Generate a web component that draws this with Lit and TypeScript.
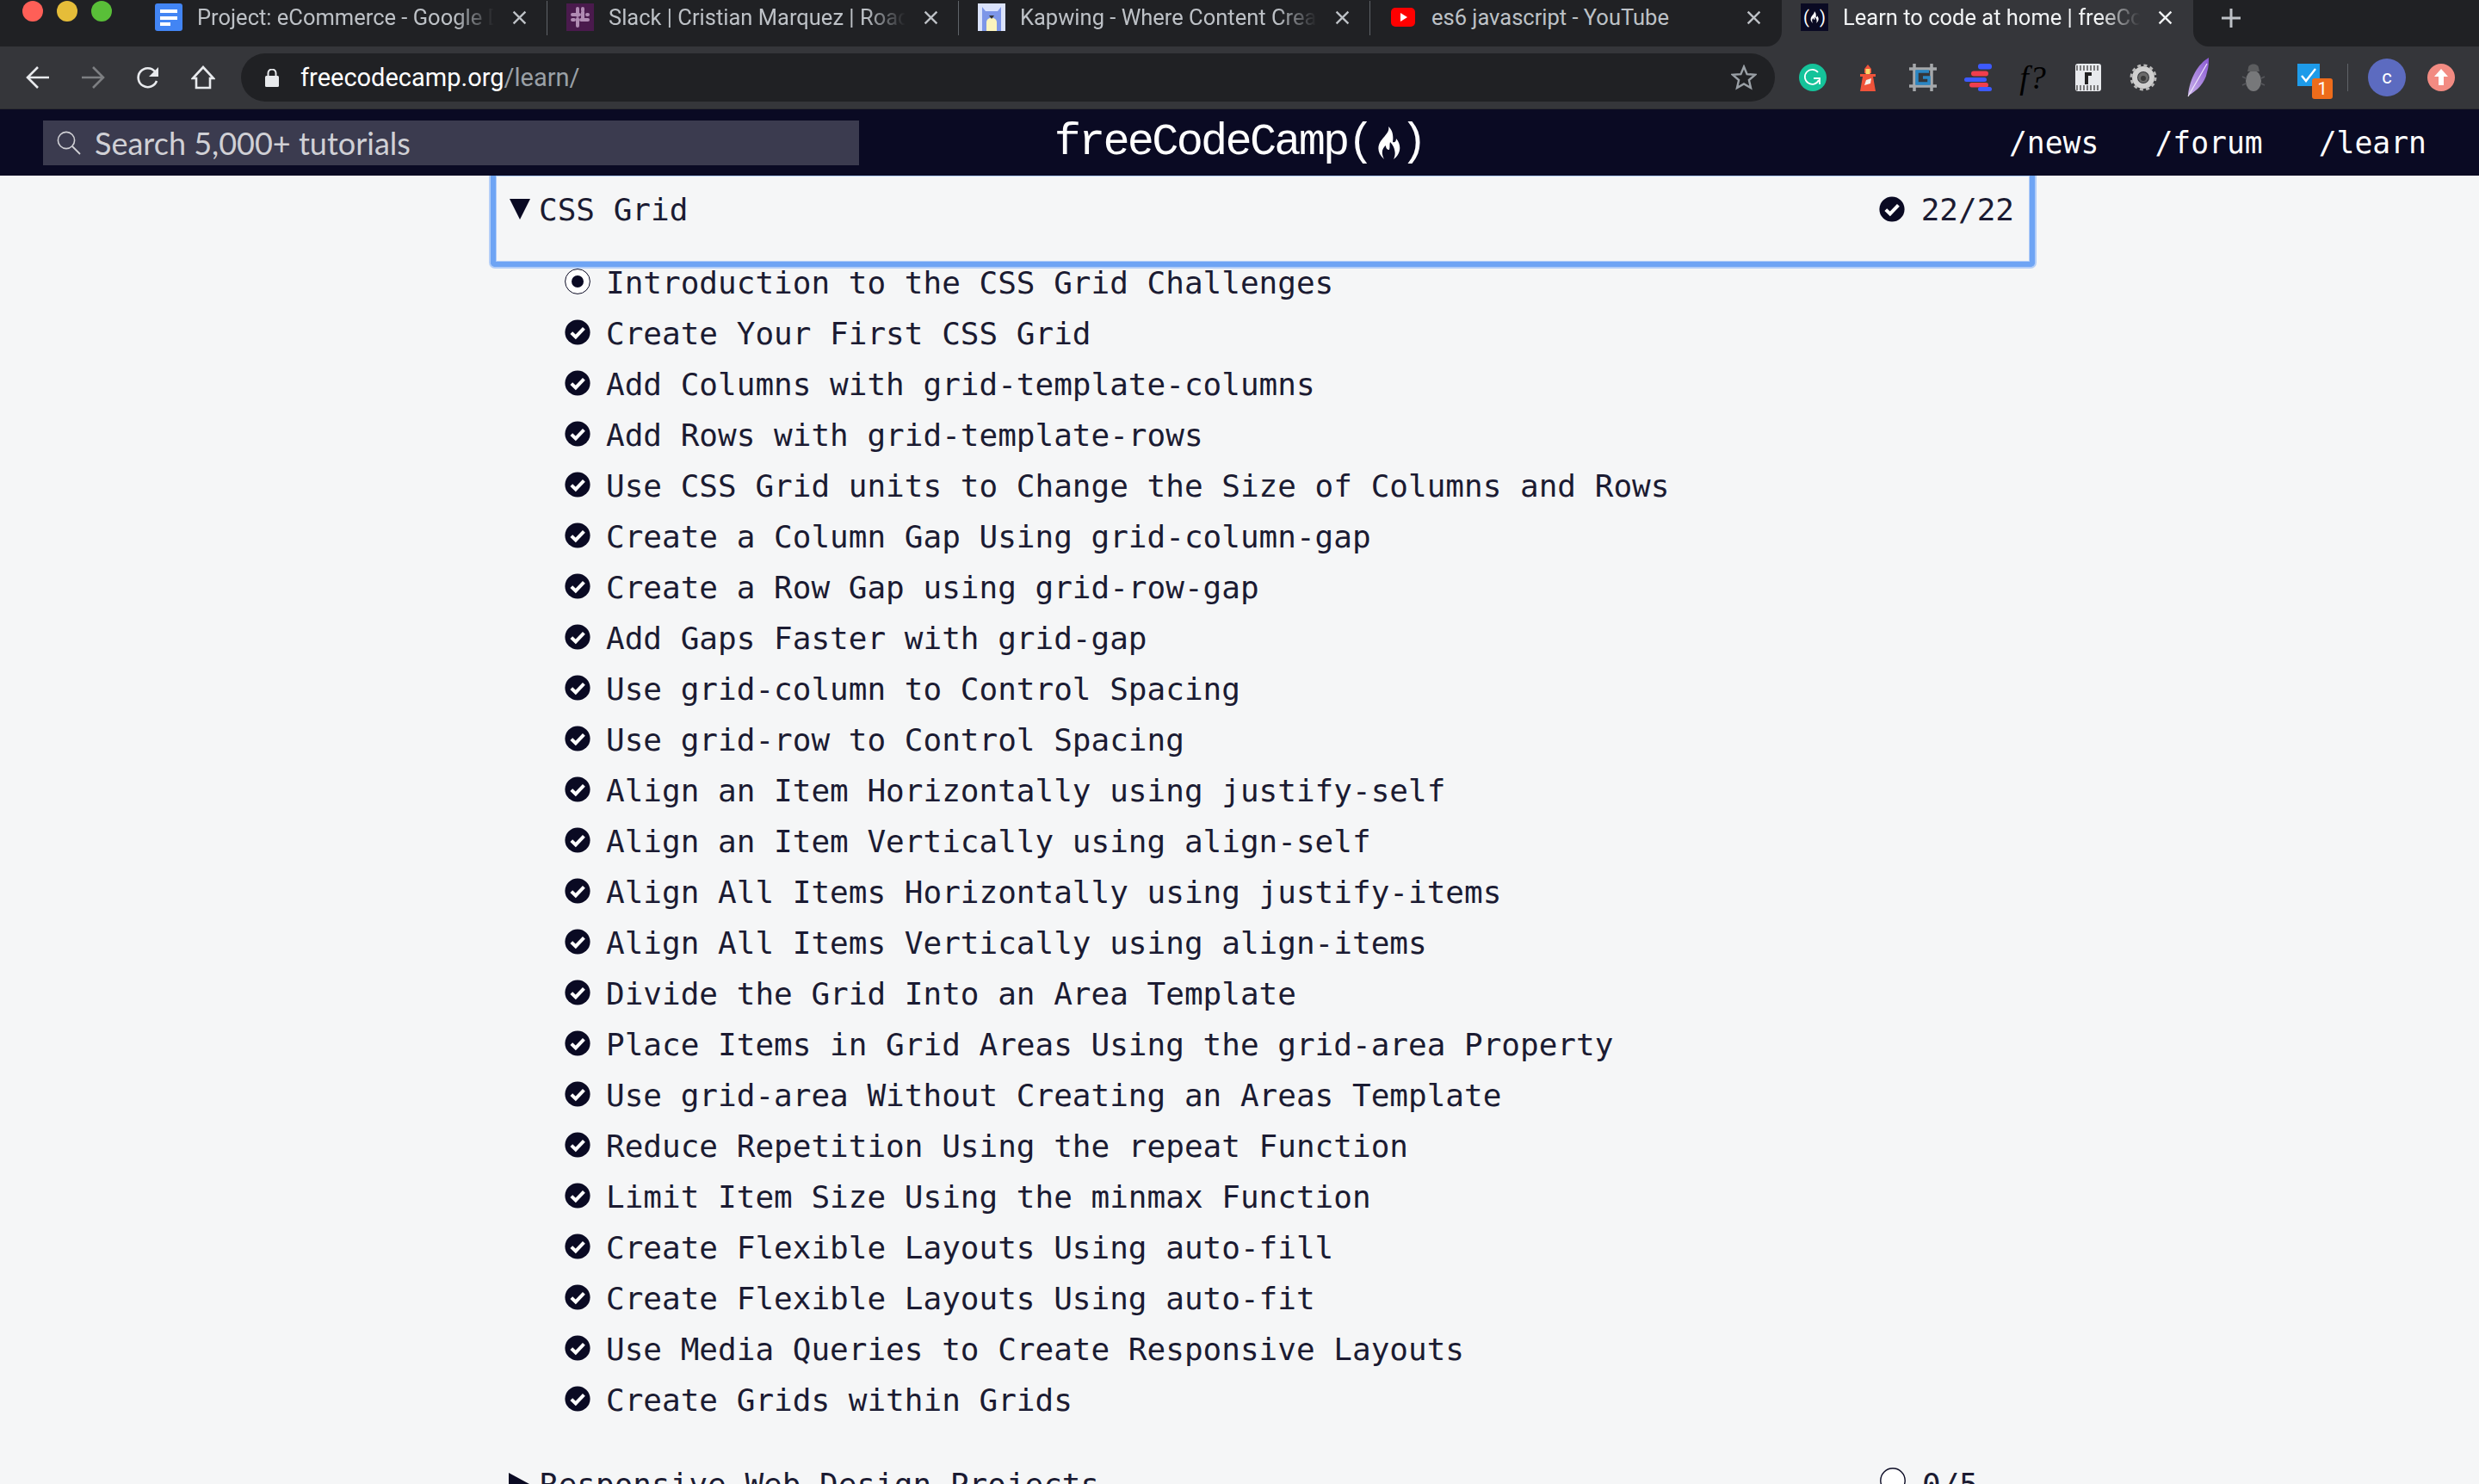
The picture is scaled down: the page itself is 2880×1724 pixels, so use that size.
import { LitElement, css, html } from "lit";
import { customElement } from "lit/decorators.js";

const flame = (w: number, h: number) => html`<svg width=${w} height=${h} viewBox="0 0 27 38"><path fill="#fff" d="M13 0C15 6 8 11 4 17C0 23 0 31 8 38C4 30 6 25 10 22C10 26 12 27 14 27C15 24 14 21 15 18C19 22 23 30 19 38C27 32 29 22 22 14C22 18 20 19 18 18C19 11 18 4 13 0Z"/></svg>`;

const checkIcon = html`<svg class="state" viewBox="0 0 30 30"><circle cx="15" cy="15" r="14.6" fill="#0a0a23"/><path d="M7.8 15.6l5 4.8L22.4 10.4" fill="none" stroke="#fff" stroke-width="4"/></svg>`;
const currentIcon = html`<svg class="state" viewBox="0 0 30 30"><circle cx="15" cy="15" r="14.4" fill="#fff" stroke="#0a0a23" stroke-width="1"/><circle cx="15" cy="15" r="7" fill="#0a0a23"/></svg>`;
const emptyIcon = html`<svg class="state" viewBox="0 0 30 30"><circle cx="15" cy="15" r="14.2" fill="#fff" stroke="#0a0a23" stroke-width="1.4"/></svg>`;

const favDocs = html`<svg width="32" height="32" viewBox="0 0 32 32"><rect width="32" height="32" rx="3" fill="#4285f4"/><path d="M6 7h20v4H6zM6 15h20v4H6zM6 22h12v4H6z" fill="#fff"/></svg>`;
const favSlack = html`<svg width="32" height="32" viewBox="0 0 32 32"><rect width="32" height="32" fill="#4a1a4d"/><path d="M13 6v8M19 10v8M7 13h8M17 19h8M13 18v8M19 6v2M24 13h1M7 19h2" stroke="#b08bb3" stroke-width="4" stroke-linecap="round"/></svg>`;
const favKapwing = html`<svg width="32" height="32" viewBox="0 0 32 32"><rect width="32" height="32" fill="#dbe3fb"/><path d="M5 4l4 5h14l4-5v28H5z" fill="#7d96e8"/><path d="M10 32V22c0-7 12-7 12 0v10z" fill="#fbf4bd"/><path d="M13 14h6l-3 4z" fill="#333"/></svg>`;
const favYoutube = html`<svg width="32" height="32" viewBox="0 0 32 32"><rect x="2" y="5" width="28" height="22" rx="5" fill="#f00"/><path d="M13 11l8 5-8 5z" fill="#fff"/></svg>`;
const favFcc = html`<span class="fav-fcc"><span>(</span>${flame(10, 14)}<span>)</span></span>`;

const tabs = [
  { title: "Project: eCommerce - Google Docs", icon: favDocs, fade: true },
  { title: "Slack | Cristian Marquez | Roadmap", icon: favSlack, fade: true },
  { title: "Kapwing - Where Content Creators", icon: favKapwing, fade: true },
  { title: "es6 javascript - YouTube", icon: favYoutube, fade: false },
  { title: "Learn to code at home | freeCodeCamp", icon: favFcc, fade: true },
];

const extensions = [
  html`<svg width="32" height="32" viewBox="0 0 32 32"><circle cx="16" cy="16" r="16" fill="#15c39a"/><path d="M22 10a8.5 8.5 0 1 0 1 9M17 17h7v7" fill="none" stroke="#fff" stroke-width="1.8"/></svg>`,
  html`<svg width="32" height="32" viewBox="0 0 32 32"><path d="M12 6l4-5 4 5v5h-8z" fill="#f0533a"/><rect x="13.5" y="6" width="5" height="6" fill="#fbd96a"/><path d="M7 12h18v3h-3l3 17H7l3-17H7z" fill="#f0533a"/><path d="M12 25l2-6 6-2-1 6z" fill="#f5f1ea"/></svg>`,
  html`<svg width="32" height="32" viewBox="0 0 32 32"><path d="M6 0v32M26 0v32M0 6h32M0 26h32" stroke="#a5a8ab" stroke-width="3.5"/><path d="M23 9H9v14h14v-7h-7" fill="none" stroke="#2a86c4" stroke-width="3.5"/></svg>`,
  html`<svg width="32" height="32" viewBox="0 0 32 32"><rect x="16" width="16" height="6.5" rx="3" fill="#3d5afe"/><rect x="8" y="8.5" width="20" height="6" rx="3" fill="#f03e4d"/><rect y="16" width="26" height="5" rx="2.5" fill="#3d5afe"/><rect x="6" y="22" width="22" height="5.5" rx="2.7" fill="#f03e4d"/><rect x="16" y="27" width="16" height="5" rx="2.5" fill="#3d5afe"/></svg>`,
  html`<span class="ext-f">f?</span>`,
  html`<svg width="32" height="34" viewBox="0 0 32 34"><rect x="1" y="1" width="30" height="32" rx="3" fill="#e8eaed"/><path d="M3 3v6M7 3v6M11 3v6M15 3v6M19 3v6M23 3v6M27 3v6M3 26v6M7 26v6M11 26v6M15 26v6M19 26v6M23 26v6M27 26v6" stroke="#555" stroke-width="1.5"/><path d="M12 11h8v4h-4v10h-4z" fill="#222"/></svg>`,
  html`<svg width="32" height="34" viewBox="0 0 32 34"><circle cx="16" cy="17" r="10" fill="none" stroke="#cfcfcf" stroke-width="6"/><circle cx="16" cy="17" r="14" fill="none" stroke="#b8b8b8" stroke-width="3" stroke-dasharray="4 3.33"/><circle cx="16" cy="17" r="6" fill="#6a6a6a"/><circle cx="16" cy="18" r="3" fill="#3a3a3a"/></svg>`,
  html`<svg width="28" height="48" viewBox="0 0 28 48"><defs><linearGradient id="q" x1="0" y1="1" x2="1" y2="0"><stop offset="0" stop-color="#c9b2ea"/><stop offset="1" stop-color="#8a58d2"/></linearGradient></defs><path d="M26 1C14 8 4 24 2 45C12 40 22 30 24 18C26 12 26 6 26 1Z" fill="url(#q)"/><path d="M24 8L2 46" stroke="#efe6fb" stroke-width="1.2"/></svg>`,
  html`<svg width="32" height="34" viewBox="0 0 32 34"><ellipse cx="16" cy="21" rx="9" ry="12" fill="#77787a"/><path d="M10 6c0-6 12-6 12 0l1 4H9z" fill="#5c5d5f"/><path d="M3 16l4 2M3 26l4-2M29 16l-4 2M29 26l-4-2" stroke="#55565a" stroke-width="1.5"/></svg>`,
  html`<span class="ext-todo"><svg width="26" height="26" viewBox="0 0 26 26"><rect width="26" height="26" fill="#1e9be9"/><path d="M5 14l5 6L21 6" fill="none" stroke="#fff" stroke-width="2.4"/></svg><span class="badge">1</span></span>`,
];

const lessons = [
  "Introduction to the CSS Grid Challenges",
  "Create Your First CSS Grid",
  "Add Columns with grid-template-columns",
  "Add Rows with grid-template-rows",
  "Use CSS Grid units to Change the Size of Columns and Rows",
  "Create a Column Gap Using grid-column-gap",
  "Create a Row Gap using grid-row-gap",
  "Add Gaps Faster with grid-gap",
  "Use grid-column to Control Spacing",
  "Use grid-row to Control Spacing",
  "Align an Item Horizontally using justify-self",
  "Align an Item Vertically using align-self",
  "Align All Items Horizontally using justify-items",
  "Align All Items Vertically using align-items",
  "Divide the Grid Into an Area Template",
  "Place Items in Grid Areas Using the grid-area Property",
  "Use grid-area Without Creating an Areas Template",
  "Reduce Repetition Using the repeat Function",
  "Limit Item Size Using the minmax Function",
  "Create Flexible Layouts Using auto-fill",
  "Create Flexible Layouts Using auto-fit",
  "Use Media Queries to Create Responsive Layouts",
  "Create Grids within Grids",
];

@customElement("app-root")
export class AppRoot extends LitElement {
  static styles = css`
    :host {
      display: block;
      height: 1724px;
      overflow: hidden;
      background: #f5f6f7;
      font-family: Roboto, "Liberation Sans", sans-serif;
    }

    .tabstrip {
      display: flex;
      height: 54px;
      background: #35363a;
    }
    .strip-left {
      display: flex;
      width: 2070px;
      flex: none;
      background: #202124;
      border-bottom-right-radius: 18px;
    }
    .lights {
      display: flex;
      gap: 16px;
      width: 132px;
      flex: none;
      padding: 1px 0 0 26px;
    }
    .lights i {
      width: 24px;
      height: 24px;
      border-radius: 50%;
    }
    .tab {
      display: flex;
      align-items: flex-start;
      width: 478px;
      flex: none;
      box-sizing: border-box;
      padding: 4px 0 0 22px;
      position: relative;
      color: #bdc1c6;
      font-size: 25.5px;
    }
    .tab.sep::after {
      content: "";
      position: absolute;
      right: 0;
      top: 1px;
      height: 40px;
      width: 1px;
      background: #5f6368;
    }
    .tab.active {
      color: #f1f3f4;
    }
    .tab-title {
      width: 352px;
      flex: none;
      margin-left: 17px;
      white-space: nowrap;
      overflow: hidden;
      line-height: 32px;
    }
    .tab-title.fade {
      -webkit-mask-image: linear-gradient(90deg, #000 85%, transparent 98%);
      mask-image: linear-gradient(90deg, #000 85%, transparent 98%);
    }
    .tab-close {
      width: 17px;
      height: 17px;
      flex: none;
      margin: 8px 0 0 14px;
    }
    .fav-fcc {
      display: flex;
      align-items: center;
      justify-content: center;
      gap: 1px;
      width: 32px;
      height: 32px;
      background: #0a0a23;
      color: #fff;
      font-size: 20px;
      line-height: 32px;
    }
    .strip-right {
      flex: 1;
      background: #202124;
      border-bottom-left-radius: 18px;
      padding: 9px 0 0 32px;
    }

    .toolbar {
      display: flex;
      align-items: center;
      height: 73px;
      box-sizing: border-box;
      padding: 0 0 0 12px;
      background: #35363a;
      border-bottom: 1px solid #2c2d30;
    }
    .slot {
      width: 64px;
      height: 56px;
      flex: none;
      display: flex;
      align-items: center;
      justify-content: center;
    }
    .omnibox {
      display: flex;
      align-items: center;
      width: 1782px;
      height: 56px;
      flex: none;
      box-sizing: border-box;
      margin: 0 12px 0 12px;
      padding: 0 21px 0 28px;
      border-radius: 28px;
      background: #202124;
      font-size: 29px;
      color: #9aa0a6;
    }
    .url {
      flex: 1;
      margin-left: 25px;
    }
    .url b {
      font-weight: 400;
      color: #fff;
    }
    .ext-f {
      font: italic 38px "Liberation Serif", serif;
      letter-spacing: 1px;
      color: #000;
      white-space: nowrap;
    }
    .ext-todo {
      position: relative;
      display: block;
      width: 26px;
      height: 41px;
      margin-top: 9px;
    }
    .badge {
      position: absolute;
      left: 17px;
      top: 17px;
      width: 24px;
      height: 24px;
      border-radius: 3px;
      background: #ee6c1b;
      color: #fff;
      font-size: 20px;
      line-height: 24px;
      text-align: center;
    }
    .tool-sep {
      width: 1px;
      height: 32px;
      margin: 0 23px 0 13px;
      background: #5f6368;
      flex: none;
    }
    .avatar {
      width: 44px;
      height: 44px;
      flex: none;
      border-radius: 50%;
      background: #5c6bc0;
      color: #fff;
      font-size: 22px;
      line-height: 44px;
      text-align: center;
    }
    .update {
      margin-left: 25px;
      flex: none;
    }

    .site-nav {
      display: grid;
      grid-template-columns: 1fr auto 1fr;
      align-items: center;
      height: 77px;
      background: #0a0a23;
      color: #fff;
    }
    .search {
      display: flex;
      align-items: center;
      width: 948px;
      height: 52px;
      box-sizing: border-box;
      margin-left: 50px;
      padding-left: 16px;
      background: #3b3b4f;
      color: #d0d0d5;
      font: 36px Lato, sans-serif;
    }
    .search span {
      margin-left: 16px;
    }
    .logo {
      display: flex;
      align-items: center;
      font: 52px "Liberation Mono", monospace;
      letter-spacing: -2.8px;
      line-height: 60px;
    }
    .logo svg {
      margin: 0 0 0 6px;
    }
    .links {
      display: flex;
      justify-content: flex-end;
      gap: 65px;
      padding-right: 61px;
      font: 34.7px "DejaVu Sans Mono", monospace;
    }

    .content {
      padding-left: 570px;
      color: #1b1b32;
      font: 36px "DejaVu Sans Mono", monospace;
    }
    .block-head {
      display: flex;
      justify-content: space-between;
      box-sizing: border-box;
      width: 1794px;
      height: 106px;
      padding: 19px 18px 0 16px;
      border: 6px solid #6ea4f4;
      border-top: none;
      border-radius: 0 0 5px 5px;
      box-shadow: 0 0 0 2px #b3cef8, inset 0 0 0 1px #b3cef8;
      clip-path: inset(0 -4px -4px -4px);
    }
    .head-left,
    .head-right {
      display: flex;
      align-items: center;
      height: 40px;
    }
    .arrow-down {
      width: 0;
      height: 0;
      margin-right: 10px;
      border-left: 12px solid transparent;
      border-right: 12px solid transparent;
      border-top: 24px solid #0a0a23;
    }
    .arrow-right {
      width: 0;
      height: 0;
      margin-right: 12px;
      border-top: 13px solid transparent;
      border-bottom: 13px solid transparent;
      border-left: 24px solid #0a0a23;
    }
    .state {
      width: 30px;
      height: 30px;
      flex: none;
    }
    .head-right .state {
      margin-right: 19px;
    }
    ul {
      list-style: none;
      margin: -11px 0 0;
      padding: 0 0 0 86px;
    }
    li {
      display: flex;
      align-items: center;
      height: 59px;
      white-space: pre;
    }
    li .state {
      margin: -3px 18px 0 0;
    }
    .next {
      display: flex;
      justify-content: space-between;
      width: 1796px;
      box-sizing: border-box;
      padding: 48px 68px 0 21px;
    }
    .next .state {
      margin-top: -8px;
    }
  `;

  private renderTab(t: (typeof tabs)[number], i: number) {
    return html`<div class="tab ${i === 4 ? "active" : ""} ${i < 3 ? "sep" : ""}">
      ${t.icon}
      <div class="tab-title ${t.fade ? "fade" : ""}">${t.title}</div>
      <svg class="tab-close" viewBox="0 0 16 16"><path d="M1.5 1.5l13 13M14.5 1.5l-13 13" stroke="currentColor" stroke-width="2.2"/></svg>
    </div>`;
  }

  render() {
    return html`
      <div class="tabstrip">
        <div class="strip-left">
          <div class="lights">
            <i style="background:#ff5f57"></i>
            <i style="background:#e5bd39"></i>
            <i style="background:#59bf38"></i>
          </div>
          ${tabs.slice(0, 4).map((t, i) => this.renderTab(t, i))}
        </div>
        ${this.renderTab(tabs[4], 4)}
        <div class="strip-right">
          <svg width="24" height="24" viewBox="0 0 24 24"><path d="M12 1v22M1 12h22" stroke="#bdc1c6" stroke-width="3"/></svg>
        </div>
      </div>

      <div class="toolbar">
        <div class="slot"><svg width="28" height="28" viewBox="0 0 28 28"><path d="M27 14H3M14 2L2 14l12 12" fill="none" stroke="#e8eaed" stroke-width="2.6"/></svg></div>
        <div class="slot"><svg width="28" height="28" viewBox="0 0 28 28"><path d="M1 14h24M14 2l12 12-12 12" fill="none" stroke="#7d7f82" stroke-width="2.6"/></svg></div>
        <div class="slot"><svg width="28" height="28" viewBox="0 0 28 28"><path d="M24 18a11 11 0 1 1-2-11" fill="none" stroke="#e8eaed" stroke-width="2.6"/><path d="M26 2v11H15z" fill="#e8eaed"/></svg></div>
        <div class="slot"><svg width="28" height="28" viewBox="0 0 28 28"><path d="M14 2L2 15h4v11h16V15h4z" fill="none" stroke="#e8eaed" stroke-width="2.6"/></svg></div>
        <div class="omnibox">
          <svg width="16" height="21" viewBox="0 0 16 21"><rect y="8" width="16" height="13" rx="1.5" fill="#e8eaed"/><path d="M3.5 9V5a4.5 4.5 0 0 1 9 0v4" fill="none" stroke="#e8eaed" stroke-width="2"/></svg>
          <div class="url"><b>freecodecamp.org</b>/learn/</div>
          <svg width="30" height="30" viewBox="0 0 30 30"><path d="M15 2.5l3.6 8.6 9.4.8-7.1 6.1 2.1 9.1L15 22.4l-8 4.7 2.1-9.1L2 11.9l9.4-.8z" fill="none" stroke="#9aa0a6" stroke-width="2.4"/></svg>
        </div>
        ${extensions.map((e) => html`<div class="slot">${e}</div>`)}
        <div class="tool-sep"></div>
        <div class="avatar">c</div>
        <svg class="update" width="32" height="32" viewBox="0 0 32 32"><circle cx="16" cy="16" r="16" fill="#f28b82"/><path d="M16 6l8 9h-5v10h-6V15H8z" fill="#fff"/></svg>
      </div>

      <nav class="site-nav">
        <div class="search">
          <svg width="28" height="28" viewBox="0 0 28 28"><circle cx="11" cy="11" r="9.6" fill="none" stroke="#d0d0d5" stroke-width="1.6"/><path d="M18 18l9 9" stroke="#d0d0d5" stroke-width="1.8"/></svg>
          <span>Search 5,000+ tutorials</span>
        </div>
        <div class="logo">freeCodeCamp(${flame(27, 38)})</div>
        <div class="links"><span>/news</span><span>/forum</span><span>/learn</span></div>
      </nav>

      <main class="content">
        <div class="block-head">
          <div class="head-left"><i class="arrow-down"></i>CSS Grid</div>
          <div class="head-right">${checkIcon}22/22</div>
        </div>
        <ul>
          ${lessons.map((l, i) => html`<li>${i === 0 ? currentIcon : checkIcon}<span>${l}</span></li>`)}
        </ul>
        <div class="next">
          <div class="head-left"><i class="arrow-right"></i>Responsive Web Design Projects</div>
          <div class="head-right">${emptyIcon}<span>0/5</span></div>
        </div>
      </main>
    `;
  }
}
